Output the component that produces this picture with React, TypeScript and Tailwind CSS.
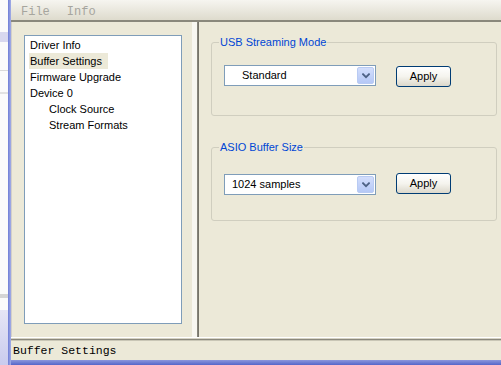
const ui = "font-['Liberation_Sans',Arial,sans-serif]";
const mono = "font-['Liberation_Mono','Courier_New',monospace]";

type TreeItem = { label: string; depth: number; selected?: boolean };

const treeItems: TreeItem[] = [
  { label: "Driver Info", depth: 0 },
  { label: "Buffer Settings", depth: 0, selected: true },
  { label: "Firmware Upgrade", depth: 0 },
  { label: "Device 0", depth: 0 },
  { label: "Clock Source", depth: 1 },
  { label: "Stream Formats", depth: 1 },
];

function Chevron() {
  return (
    <svg width="8" height="6" viewBox="0 0 8 6" fill="none">
      <path d="M1 1.2 L4 4.2 L7 1.2" stroke="#4d6185" strokeWidth="1.8" strokeLinecap="square" />
    </svg>
  );
}

function Combo({ value, textPad }: { value: string; textPad: string }) {
  return (
    <div className="flex h-[21px] w-[152px] items-stretch border border-[#7f9db9] bg-white p-px">
      <div className={`flex flex-1 items-center ${textPad} text-[11px] text-black`}>{value}</div>
      <div className="flex w-[17px] items-center justify-center rounded-[2px] border border-[#b9cbf3] bg-gradient-to-b from-[#d3defc] to-[#b5c8f6]">
        <Chevron />
      </div>
    </div>
  );
}

function ApplyButton({ offset }: { offset: string }) {
  return (
    <button
      type="button"
      className={`${offset} flex h-[21px] w-[55px] items-center justify-center rounded-[3px] border border-[#003c74] bg-gradient-to-b from-white via-[#f5f4ee] to-[#dcd8cb] text-[11px] text-black`}
    >
      Apply
    </button>
  );
}

export default function App() {
  return (
    <div className={`${ui} flex h-[365px] w-[501px] overflow-hidden bg-[#ece9d8]`}>
      {/* window behind */}
      <div className="flex w-[8px] flex-col bg-[#fbfbfb]">
        <div className="h-[32px]" />
        <div className="h-[10px] bg-[#d8d8ef]" />
        <div className="h-[28px]" />
        <div className="h-px bg-[#d9d9d9]" />
        <div className="h-[21px]" />
        <div className="h-[2px] bg-[#e2e2e2]" />
        <div className="h-[200px]" />
        <div className="h-[4px] bg-[#d5d5d5]" />
        <div className="h-[12px]" />
        <div className="flex-1 bg-gradient-to-b from-[#e6e6f5] to-[#c9cbee]" />
      </div>
      <div className="w-[3px] bg-gradient-to-r from-[#6f7dd6] to-[#a4aee6]" />

      <div className="flex flex-1 flex-col">
        {/* menu bar */}
        <div className={`${mono} flex h-[22px] items-center border-b-2 border-[#8a887c] bg-gradient-to-b from-[#f6f5f0] to-[#dedbcd] pl-[10px] pt-[3px] text-[12px] text-[#a6a59e]`}>
          <span>File</span>
          <span className="ml-[17px]">Info</span>
        </div>

        {/* body */}
        <div className="flex h-[315px]">
          <div className="flex w-[181px] flex-col border-l border-[#d4d0c8] pb-[13px] pl-[12px] pr-[10px] pt-[13px]">
            <div className="flex-1 border border-[#7f9db9] bg-white pl-[4px] pt-px">
              {treeItems.map((item) => (
                <div key={item.label} className={`flex h-[16px] items-center ${item.depth ? "pl-[19px]" : ""}`}>
                  <span className={`px-px text-[11px] leading-[16px] text-black ${item.selected ? "bg-[#ece9d8] pr-[6px]" : ""}`}>
                    {item.label}
                  </span>
                </div>
              ))}
            </div>
          </div>

          <div className="w-[5px] bg-[#f8f7f1]" />
          <div className="w-[2px] bg-gradient-to-r from-[#8e8c81] to-[#6f6d64]" />

          {/* right panel */}
          <div className="flex flex-1 flex-col pl-[12px] pr-[4px] pt-[14px]">
            <fieldset className="rounded-[3px] border border-[#d0cebf] pb-[28px]">
              <legend className="ml-[7px] px-px text-[11px] leading-[13px] text-[#0046d5]">USB Streaming Mode</legend>
              <div className="mt-[16px] flex items-start pl-[12px]">
                <Combo value="Standard" textPad="pl-[16px]" />
                <ApplyButton offset="ml-[20px] mt-px" />
              </div>
            </fieldset>

            <fieldset className="mt-[25px] rounded-[3px] border border-[#d0cebf] pb-[25px]">
              <legend className="ml-[7px] px-px text-[11px] leading-[13px] text-[#0046d5]">ASIO Buffer Size</legend>
              <div className="mt-[19px] flex items-start pl-[12px]">
                <div className="mt-px">
                  <Combo value="1024 samples" textPad="pl-[6px]" />
                </div>
                <ApplyButton offset="ml-[20px]" />
              </div>
            </fieldset>
          </div>
        </div>

        {/* status bar */}
        <div className="flex h-[23px] flex-col">
          <div className="h-px bg-white" />
          <div className="h-px bg-[#d6d3c4]" />
          <div className="h-px bg-[#8a887c]" />
          <div className="h-px bg-[#c9c6b6]" />
          <div className={`${mono} flex flex-1 items-center pl-[2px] text-[11.5px] text-black`}>Buffer Settings</div>
        </div>
        <div className="h-[5px] bg-gradient-to-b from-[#8c97dc] to-[#5465c9]" />
      </div>
    </div>
  );
}
